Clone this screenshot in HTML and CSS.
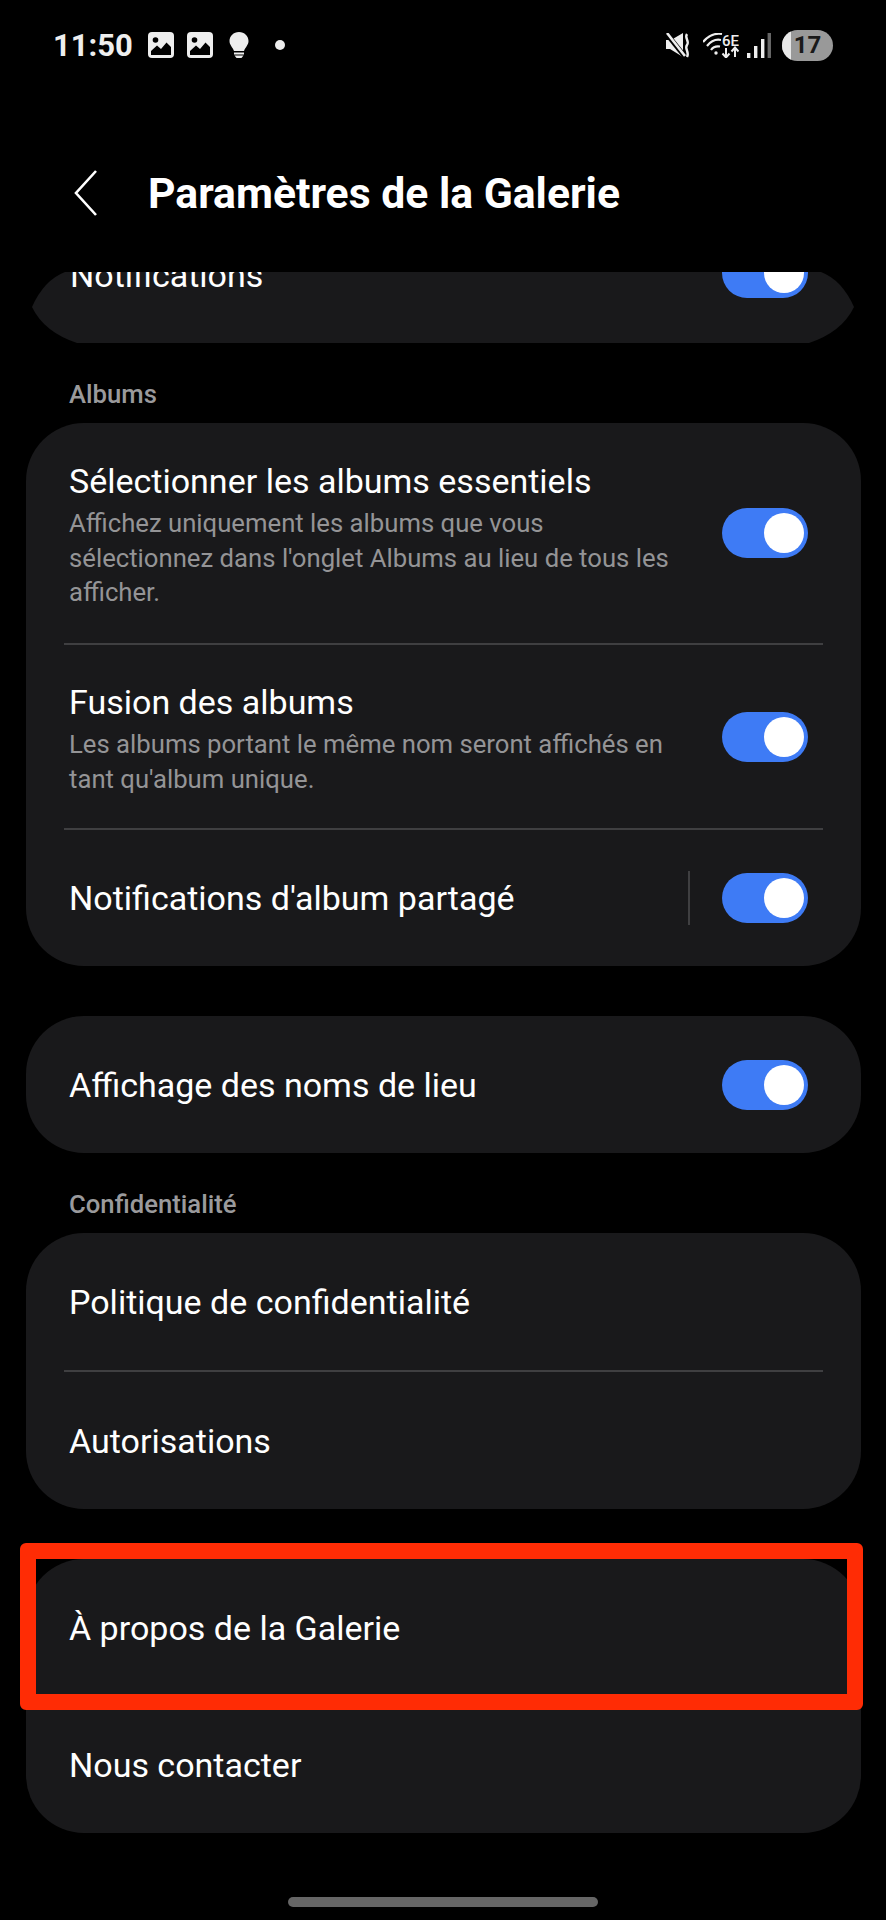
FILE: index.html
```html
<!DOCTYPE html>
<html lang="fr">

<head>
    <meta name="viewport" content="width=device-width, initial-scale=1">
    <link rel="stylesheet" href="styles.css">
</head>

<body>

    <!-- Status bar -->
    <div class="status-bar">
        <span class="time">11:50</span>
        <svg class="icon-image" viewBox="0 0 26 26">
            <rect width="26" height="26" rx="4" fill="#eee" />
            <circle cx="7.5" cy="8" r="2.8" fill="#000" />
            <path d="M3 23 V19 L9 13.5 L13 17 L18.5 10.5 L23 15 V23 Z" fill="#000" />
        </svg>
        <svg class="icon-image" viewBox="0 0 26 26">
            <rect width="26" height="26" rx="4" fill="#eee" />
            <circle cx="7.5" cy="8" r="2.8" fill="#000" />
            <path d="M3 23 V19 L9 13.5 L13 17 L18.5 10.5 L23 15 V23 Z" fill="#000" />
        </svg>
        <svg class="icon-bulb" viewBox="0 0 20 26">
            <path d="M10 0 C4.5 0 0.5 4 0.5 9 C0.5 13 3.5 15 5 19 H15 C16.5 15 19.5 13 19.5 9 C19.5 4 15.5 0 10 0 Z" fill="#eee" />
            <rect x="5" y="20.5" width="10" height="2" fill="#eee" />
            <path d="M5.5 23.5 H14.5 L12.5 26 H7.5 Z" fill="#eee" />
        </svg>
        <span class="status-dot"></span>

        <div class="status-right">
            <svg class="icon-mute" viewBox="0 0 25 25">
                <path d="M0 7 H5 L17 0 V24 L4 16 H0 Z" fill="#eee" />
                <path d="M0 0 L20 25" stroke="#000" stroke-width="5" />
                <path d="M1 0 L19 23" stroke="#eee" stroke-width="2.6" />
                <path d="M21 1 C18 5 24 8 21 12 C18 16 24 19 21 24" fill="none" stroke="#eee" stroke-width="2.4" />
            </svg>
            <svg class="icon-wifi" viewBox="0 0 36 25">
                <path d="M0 9 C6 2 13 0 19 1" fill="none" stroke="#eee" stroke-width="2.2" />
                <path d="M4 13 C8 8 13 6 18 7" fill="none" stroke="#eee" stroke-width="2.2" />
                <path d="M8 17 C10 14 14 13 17 13.5" fill="none" stroke="#eee" stroke-width="2.2" />
                <circle cx="13" cy="20" r="1.7" fill="#eee" />
                <text x="19" y="13" class="wifi-label">6E</text>
                <path d="M23 15 V24 M19.5 20.5 L23 24.5 L26.5 20.5" fill="none" stroke="#eee" stroke-width="2" />
                <path d="M32 24 V15 M28.5 18.5 L32 14.5 L35.5 18.5" fill="none" stroke="#eee" stroke-width="2" />
            </svg>
            <svg class="icon-signal" viewBox="0 0 24 25">
                <rect x="0" y="20" width="3.4" height="5" fill="#eee" />
                <rect x="7" y="13" width="3.4" height="12" fill="#eee" />
                <rect x="14" y="6" width="3.4" height="19" fill="#eee" />
                <rect x="20.6" y="0" width="3.4" height="25" fill="#666" />
            </svg>
            <div class="battery">
                <span class="battery-level"></span>
                <span class="battery-text">17</span>
            </div>
        </div>
    </div>

    <!-- Header -->
    <div class="header">
        <svg class="back" viewBox="0 0 24 46">
            <path d="M22 1 L2 23 L22 45" fill="none" stroke="#fff" stroke-width="2.6" />
        </svg>
        <h1>Paramètres de la Galerie</h1>
    </div>

    <!-- Notifications card, scrolled under the header -->
    <div class="card card-clipped">
        <div class="clipped-row">
            <span class="row-title">Notifications</span>
            <span class="toggle"></span>
        </div>
    </div>

    <p class="section-label">Albums</p>
    <div class="card">
        <div class="row">
            <div class="row-text">
                <div class="row-title">Sélectionner les albums essentiels</div>
                <div class="row-desc">Affichez uniquement les albums que vous sélectionnez dans l'onglet Albums au lieu de tous les afficher.</div>
            </div>
            <span class="toggle"></span>
        </div>
        <div class="divider"></div>
        <div class="row row-compact">
            <div class="row-text">
                <div class="row-title">Fusion des albums</div>
                <div class="row-desc">Les albums portant le même nom seront affichés en tant qu'album unique.</div>
            </div>
            <span class="toggle"></span>
        </div>
        <div class="divider"></div>
        <div class="row row-single row-short">
            <div class="row-title">Notifications d'album partagé</div>
            <span class="row-sep"></span>
            <span class="toggle"></span>
        </div>
    </div>

    <div class="card card-gap">
        <div class="row row-single">
            <div class="row-title">Affichage des noms de lieu</div>
            <span class="toggle"></span>
        </div>
    </div>

    <p class="section-label">Confidentialité</p>
    <div class="card">
        <div class="row row-single">
            <div class="row-title">Politique de confidentialité</div>
        </div>
        <div class="divider"></div>
        <div class="row row-single">
            <div class="row-title">Autorisations</div>
        </div>
    </div>

    <div class="card card-gap card-last">
        <div class="row row-single">
            <div class="row-title">À propos de la Galerie</div>
        </div>
        <div class="row row-single">
            <div class="row-title">Nous contacter</div>
        </div>
        <!-- Red annotation drawn over the first row -->
        <div class="highlight"></div>
    </div>

    <div class="home-bar"></div>

</body>

</html>
```

FILE: styles.css
```css
* {
    box-sizing: border-box;
}

body {
    font-family: Roboto, "Noto Sans", sans-serif;
    margin: 0;
    width: 886px;
    height: 1920px;
    overflow: hidden;
    background-color: #000;
    color: #fff;
}

/* Status bar */
.status-bar {
    display: flex;
    align-items: center;
    height: 90px;
    padding: 0 53px;
    color: #eee;
}

.time {
    font-size: 31px;
    font-weight: 700;
    width: 95px;
}

.icon-image {
    width: 26px;
    height: 26px;
    margin-right: 13px;
}

.icon-bulb {
    width: 20px;
    height: 26px;
    margin-left: 3px;
}

.status-dot {
    width: 10px;
    height: 10px;
    border-radius: 50%;
    background-color: #eee;
    margin-left: 26px;
}

.status-right {
    display: flex;
    align-items: center;
    margin-left: auto;
}

.icon-mute {
    width: 25px;
    height: 25px;
}

.icon-wifi {
    width: 36px;
    height: 25px;
    margin-left: 12px;
}

.wifi-label {
    font-size: 15px;
    font-weight: 500;
    fill: #eee;
}

.icon-signal {
    width: 24px;
    height: 25px;
    margin-left: 8px;
}

.battery {
    position: relative;
    width: 51px;
    height: 31px;
    margin-left: 11px;
    border-radius: 16px;
    background-color: #999;
    overflow: hidden;
    text-align: center;
}

.battery-level {
    position: absolute;
    left: 0;
    top: 0;
    bottom: 0;
    width: 9px;
    background-color: #e8e8e8;
}

.battery-text {
    position: relative;
    font-size: 24px;
    font-weight: 700;
    line-height: 31px;
    color: #1a1a1a;
}

/* Header */
.header {
    display: flex;
    align-items: center;
    height: 182px;
    padding: 24px 0 0 74px;
}

.back {
    width: 24px;
    height: 46px;
}

h1 {
    font-size: 42.7px;
    font-weight: 700;
    margin: 0 0 0 50px;
}

/* Cards */
.card {
    position: relative;
    margin: 0 25px 0 26px;
    background-color: #19191b;
    border-radius: 58px;
}

.card-gap {
    margin-top: 50px;
}

/* Ends come to a soft point while the card slides under the header */
.card-clipped {
    height: 71px;
    margin: 0 32px;
    border-radius: 0;
    overflow: hidden;
    clip-path: path("M33 0 H789 Q810 8 822 35 Q810 60 777 71 H45 Q12 60 0 35 Q12 8 33 0 Z");
}

.clipped-row {
    display: flex;
    align-items: center;
    justify-content: space-between;
    height: 50px;
    margin-top: -24px;
    padding: 0 46px 0 38px;
}

.clipped-row .row-title {
    margin-top: 4px;
}

.section-label {
    font-size: 25.7px;
    font-weight: 500;
    line-height: 30px;
    color: #9a9a9c;
    margin: 0;
    padding: 36px 0 14px 69px;
}

/* Rows */
.row {
    display: flex;
    align-items: center;
    padding: 38px 53px 33.5px 43px;
}

.row-compact {
    padding-top: 37px;
    padding-bottom: 32px;
}

.row-single {
    height: 137px;
    padding-top: 0;
    padding-bottom: 0;
}

.row-short {
    height: 136px;
}

.row-text {
    width: 610px;
    margin-right: auto;
}

/* Rows with a description have uneven padding, keep the toggle in the middle */
.row-text + .toggle {
    margin-bottom: 5px;
}

.row-title {
    font-size: 34px;
    line-height: 40px;
    margin-right: auto;
}

.row-desc {
    font-size: 25.7px;
    line-height: 34.5px;
    margin-top: 5px;
    color: #949496;
}

.row-sep {
    width: 2px;
    height: 54px;
    background-color: #3f3f41;
    margin-right: 32px;
}

.divider {
    height: 2px;
    margin: 0 38px;
    background-color: #3f3f41;
}

/* Toggle, always on in this screen */
.toggle {
    display: flex;
    justify-content: flex-end;
    align-items: center;
    flex-shrink: 0;
    width: 86px;
    height: 50px;
    padding-right: 4px;
    border-radius: 25px;
    background-color: #3e7bf5;
}

.toggle::after {
    content: "";
    width: 40px;
    height: 40px;
    border-radius: 50%;
    background-color: #fff;
}

/* Red annotation */
.highlight {
    position: absolute;
    top: -16px;
    left: -6px;
    right: -2px;
    height: 167px;
    border: 16px solid #ff2c05;
    border-radius: 6px;
}

.home-bar {
    width: 310px;
    height: 10px;
    margin: 64px auto 0;
    border-radius: 5px;
    background-color: #666;
}
```
